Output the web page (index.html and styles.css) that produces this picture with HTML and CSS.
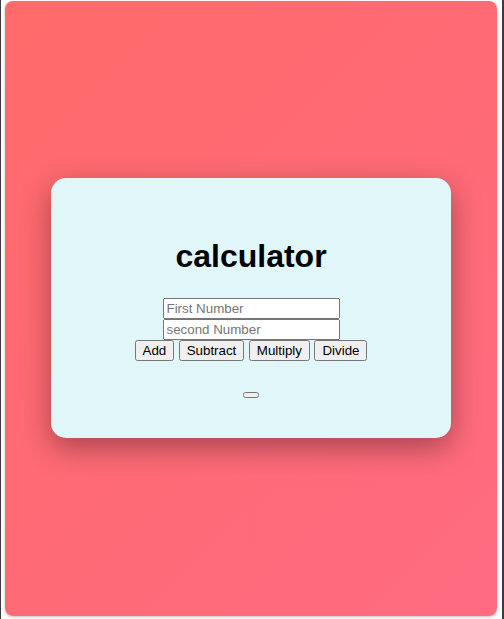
FILE: index.html
```html
<!DOCTYPE html>
<html>
<head>
<meta charset="utf-8">
<link rel="stylesheet" href="styles.css">
</head>
<body>
<div class="frame">
  <div class="app">
    <div class="card">
      <h1 class="title">calculator</h1>
      <div class="fields">
        <input class="field" type="text" placeholder="First Number"><br>
        <input class="field" type="text" placeholder="second Number"><br>
        <button class="op">Add</button>
        <button class="op">Subtract</button>
        <button class="op">Multiply</button>
        <button class="op">Divide</button>
      </div>
      <div class="result"><button class="result-btn"></button></div>
    </div>
  </div>
</div>
</body>
</html>
```
FILE: styles.css
```css
html, body {
  margin: 0;
  padding: 0;
  background: #ffffff;
}
.frame {
  box-sizing: border-box;
  height: 619px;
  border-left: 1px solid #3c3c3c;
  border-right: 2px solid #3c3c3c;
  padding: 1px 5px 3px 4px;
}
.app {
  height: 615px;
  border-radius: 8px;
  background: linear-gradient(135deg, #ff6a6a 0%, #ff6b81 100%);
  box-shadow: 0 1px 3px rgba(0, 0, 0, 0.25);
  display: flex;
  align-items: flex-start;
  justify-content: center;
  padding-top: 177px;
  box-sizing: border-box;
}
.card {
  box-sizing: border-box;
  width: 400px;
  height: 260px;
  background: #e0f6f8;
  border-radius: 15px;
  box-shadow: 0 10px 30px rgba(0, 0, 0, 0.35);
  text-align: center;
  padding-top: 39px;
  font-family: "Liberation Sans", Arial, sans-serif;
}
.title {
  margin: 21px 0 23px 0;
  font-size: 32px;
  font-weight: bold;
  color: #000;
  line-height: 37px;
}
.fields {
  line-height: 0;
}
.field {
  box-sizing: border-box;
  width: 177px;
  height: 21px;
  font-family: "Liberation Sans", Arial, sans-serif;
  font-size: 13.333px;
  line-height: normal;
}
.op {
  font-family: "Liberation Sans", Arial, sans-serif;
  font-size: 13.333px;
  line-height: normal;
}
.result {
  margin-top: 29px;
  line-height: 0;
}
.result-btn {
  font-family: "Liberation Sans", Arial, sans-serif;
  font-size: 13.333px;
}
```
